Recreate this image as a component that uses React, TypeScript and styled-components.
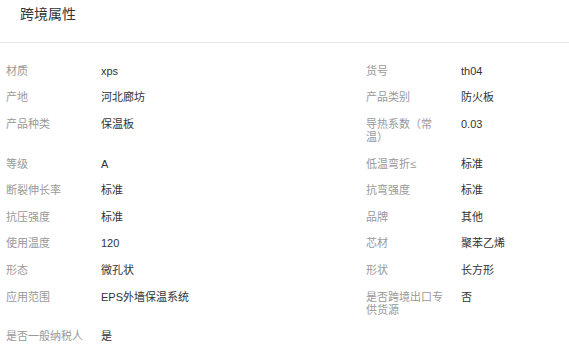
import React from "react";
import styled, { createGlobalStyle } from "styled-components";

const GlobalStyle = createGlobalStyle`
  html, body { margin: 0; padding: 0; background: #fff; }
  body { font-family: "Liberation Sans", Arial, "Noto Sans CJK SC", sans-serif; }
`;

const Panel = styled.section`
  width: 569px;
  background: #fff;
`;

const Header = styled.div`
  box-sizing: border-box;
  height: 43px;
  padding: 6px 0 0 20px;
  border-bottom: 1px solid #e8e8e8;
`;

const Title = styled.h2`
  margin: 0;
  font-size: 14px;
  font-weight: normal;
  line-height: 17px;
  color: #333;
`;

const Grid = styled.div`
  display: grid;
  grid-template-columns: 360px 1fr;
  padding: 15px 0 0 6px;
`;

const Item = styled.div`
  display: flex;
  align-items: flex-start;
  padding: 6.8px 0;
  font-size: 11px;
  line-height: 13px;
`;

const Label = styled.div`
  width: 80px;
  margin-right: 15px;
  flex: none;
  color: #999;
`;

const Value = styled.div`
  color: #333;
`;

const rows: [string, string][] = [
  ["材质", "xps"],
  ["货号", "th04"],
  ["产地", "河北廊坊"],
  ["产品类别", "防火板"],
  ["产品种类", "保温板"],
  ["导热系数（常温）", "0.03"],
  ["等级", "A"],
  ["低温弯折≤", "标准"],
  ["断裂伸长率", "标准"],
  ["抗弯强度", "标准"],
  ["抗压强度", "标准"],
  ["品牌", "其他"],
  ["使用温度", "120"],
  ["芯材", "聚苯乙烯"],
  ["形态", "微孔状"],
  ["形状", "长方形"],
  ["应用范围", "EPS外墙保温系统"],
  ["是否跨境出口专供货源", "否"],
  ["是否一般纳税人", "是"],
];

export default function App() {
  return (
    <>
      <GlobalStyle />
      <Panel>
        <Header>
          <Title>跨境属性</Title>
        </Header>
        <Grid>
          {rows.map(([k, v]) => (
            <Item key={k}>
              <Label>{k}</Label>
              <Value>{v}</Value>
            </Item>
          ))}
        </Grid>
      </Panel>
    </>
  );
}
